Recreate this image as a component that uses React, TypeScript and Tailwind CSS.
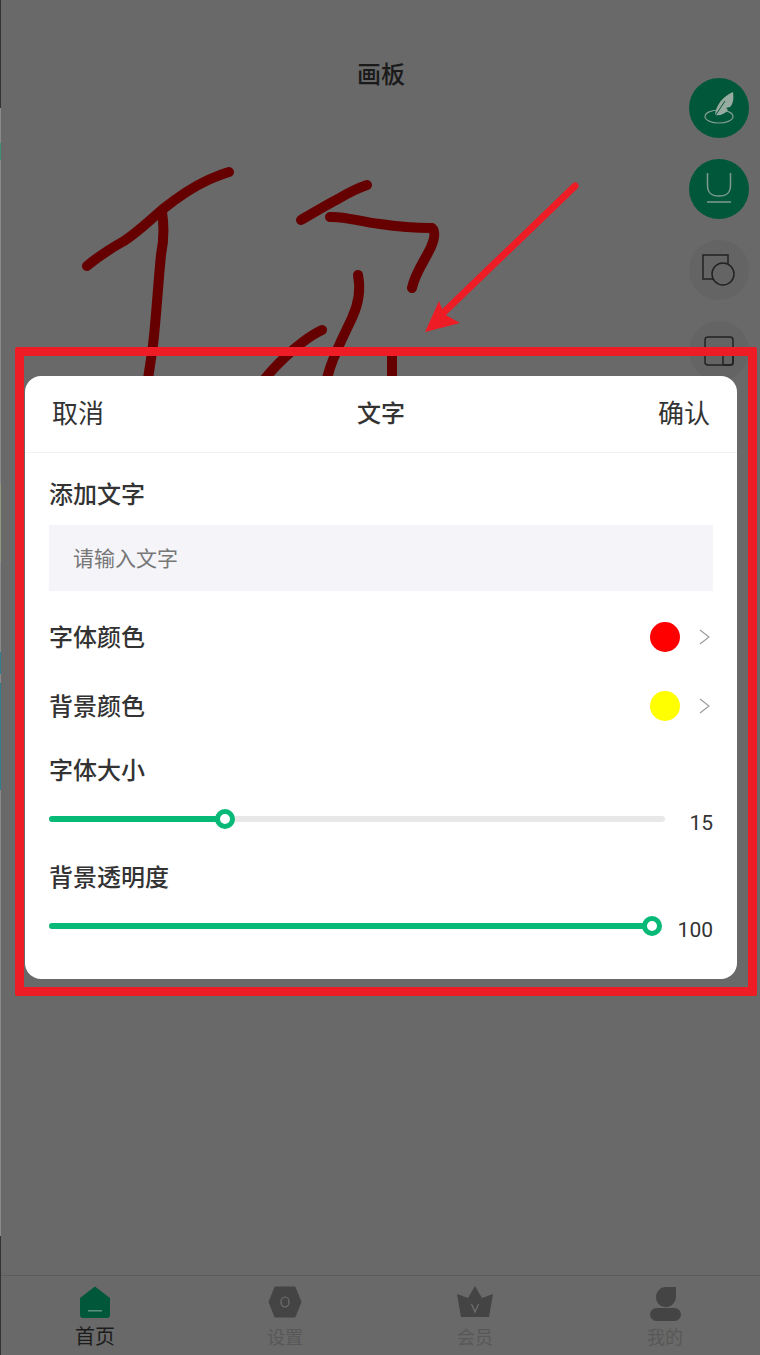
const cjk = "font-['Roboto','Noto_Sans_CJK_SC',sans-serif]";

function Slider({ pct, value, top }: { pct: number; value: number; top: string }) {
  return (
    <div className={`flex items-center ${top}`}>
      <div className="relative h-[6px] flex-1 rounded-full bg-[#e8e8e8]">
        <div className="h-full rounded-full bg-[#07b976]" style={{ width: `${pct}%` }} />
        <div
          className="absolute top-1/2 h-[20px] w-[20px] -translate-x-1/2 -translate-y-1/2 rounded-full border-[5px] border-[#07b976] bg-white"
          style={{ left: `${pct}%` }}
        />
      </div>
      <span className="ml-[24px] pt-[9px] text-right text-[21px] leading-[24px] text-[#333]">{value}</span>
    </div>
  );
}

function ColorRow({ label, color, top }: { label: string; color: string; top: string }) {
  return (
    <div className={`flex h-[36px] items-center ${top}`}>
      <span className="flex-1 pt-[2px] text-[24px] font-medium leading-[36px] text-[#333]">{label}</span>
      <span className={`h-[30px] w-[30px] rounded-full ${color}`} />
      <svg className="ml-[18px] mr-[3px]" width="12" height="18" viewBox="0 0 12 18" fill="none">
        <path d="M2 2 L11 9 L2 16" stroke="#999" strokeWidth="1.1" />
      </svg>
    </div>
  );
}

function SideButton({ active, children }: { active?: boolean; children: React.ReactNode }) {
  return (
    <div
      className={`flex h-[60px] w-[60px] items-center justify-center rounded-full ${active ? "bg-[#01573a]" : "bg-[#646464]"}`}
    >
      {children}
    </div>
  );
}

function Tab({ label, active, children }: { label: string; active?: boolean; children: React.ReactNode }) {
  return (
    <div className="flex flex-1 flex-col items-center">
      <div className="flex h-[38px] items-center justify-center">{children}</div>
      {active ? (
        <span className="mt-[3px] text-[20px] leading-[26px] text-[#1c1c1c]">{label}</span>
      ) : (
        <span className="mt-[4px] text-[18px] leading-[26px] text-[#585858]">{label}</span>
      )}
    </div>
  );
}

export default function App() {
  return (
    <div className={`relative flex h-[1355px] w-[760px] flex-col overflow-hidden bg-[#696969] ${cjk}`}>
      {/* page behind the dimmed layer */}
      <div className="relative flex-1">
        <div className="pl-[2px] pt-[59px] text-center text-[24px] font-medium leading-[32px] text-[#1a1a1a]">画板</div>

        <svg className="absolute left-0 top-0" width="760" height="400" fill="none" stroke="#660000" strokeWidth="10" strokeLinecap="round" strokeLinejoin="round">
          <path d="M87 266 C100 255 115 246 124 241 C138 232 150 220 163 209 C178 197 195 186 208 180 C215 177 222 174 229 172" />
          <path d="M162 212 C164 225 164 240 161 255 C158 285 156 320 153 345 C151 360 148 378 146 392" />
          <path d="M301 220 C315 212 328 204 338 199 C348 193 358 188 367 185" />
          <path d="M330 217 C345 216 360 222 380 224 C400 227 420 228 432 228 C436 232 434 240 431 247 C424 262 415 273 412 288" />
          <path d="M358 275 C361 290 358 305 352 318 C345 333 336 350 330 368 C327 378 325 386 324 392" />
          <path d="M322 330 C305 338 290 352 278 364 C270 372 262 382 254 392" />
          <path d="M392 352 L392 392" />
        </svg>

        <div className="absolute left-[689px] top-[78px] flex flex-col gap-[21px]">
          <SideButton active>
            <svg width="42" height="42" viewBox="0 0 42 42" fill="none">
              <ellipse cx="21" cy="29.5" rx="14" ry="6.5" stroke="#7f9c8e" strokeWidth="1.2" />
              <path d="M17 28 C18 18 25 9 35 5 C36 12 35 17 32 20 L28 21 L30 23 C27 27 22 29 17 28 Z" fill="#98aba1" />
              <path d="M17 29 L27 14" stroke="#01573a" strokeWidth="1" />
            </svg>
          </SideButton>
          <SideButton active>
            <svg width="40" height="42" viewBox="0 0 40 42" fill="none" stroke="#7d9c8f" strokeWidth="1.5">
              <path d="M8.5 5 V17 C8.5 25 12 28 20 28 C28 28 31.5 25 31.5 17 V5" />
              <path d="M8 34 H32" />
            </svg>
          </SideButton>
          <SideButton>
            <svg width="36" height="36" viewBox="0 0 36 36" fill="none" stroke="#222" strokeWidth="1.5">
              <path d="M13 27 H2 V3 H27 V11.5" />
              <circle cx="22" cy="22" r="11" />
            </svg>
          </SideButton>
          <SideButton>
            <svg width="32" height="32" viewBox="0 0 32 32" fill="none" stroke="#222" strokeWidth="1.5">
              <rect x="2" y="2" width="28" height="28" rx="3" />
              <rect x="20" y="20" width="10" height="10" rx="2" />
            </svg>
          </SideButton>
        </div>
      </div>

      <div className="flex h-[80px] border-t border-[#5c5c5c] pt-[7px]">
        <Tab label="首页" active>
          <svg width="32" height="32" viewBox="0 0 32 32">
            <path d="M16 0.5 L31 12 V29 Q31 32 28 32 H4 Q1 32 1 29 V12 Z" fill="#01573a" />
            <rect x="9" y="24" width="14" height="1.5" fill="#5f8f7a" />
          </svg>
        </Tab>
        <Tab label="设置">
          <svg width="34" height="32" viewBox="0 0 34 32">
            <path d="M7 1 H27 L33 16 L27 31 H7 L1 16 Z" fill="#444" stroke="#444" strokeWidth="1" strokeLinejoin="round" />
            <ellipse cx="17" cy="16" rx="4" ry="5" fill="none" stroke="#6f6f6f" strokeWidth="1.2" />
          </svg>
        </Tab>
        <Tab label="会员">
          <svg width="36" height="32" viewBox="0 0 36 32">
            <path d="M18 0 L25 12 L36 8 L32 31 H4 L0 8 L11 12 Z" fill="#444" />
            <path d="M14.5 18 L18 26 L21.5 18" fill="none" stroke="#6f6f6f" strokeWidth="1.2" />
          </svg>
        </Tab>
        <Tab label="我的">
          <svg className="mt-[3px]" width="32" height="34" viewBox="0 0 32 34">
            <path d="M27 0 H17 C11 0 7 5 7 10 C7 16 11 20 17 20 C23 20 27 15 27 9 Z" fill="#444" />
            <rect x="1" y="21" width="31" height="13" rx="6.5" fill="#444" />
          </svg>
        </Tab>
      </div>

      {/* sliver of the previous screen along the left edge */}
      <div className="absolute left-0 top-0 flex h-full w-px flex-col bg-[#8a8a8a]">
        <div className="h-[108px] bg-[#333]" />
        <div className="mt-[35px] h-[17px] bg-[#3f8f78]" />
        <div className="mt-[324px] h-[78px] bg-[#8f9a80]" />
        <div className="mt-[90px] h-[22px] bg-[#2f7f90]" />
        <div className="mt-[9px] h-[107px] bg-[#2f7f90]" />
        <div className="mt-[446px] h-[119px] bg-[#333]" />
      </div>

      {/* annotation arrow drawn on top of the screenshot */}
      <svg className="absolute left-0 top-0" width="760" height="340" fill="none">
        <path d="M575 186 L440 316" stroke="#ee1c25" strokeWidth="7" strokeLinecap="round" />
        <path d="M425 332 L439 301 L444 314 L460 323 Z" fill="#ee1c25" />
      </svg>

      <div className="absolute left-[15px] top-[347px] h-[649px] w-[742px] rounded-[2px] border-[9px] border-[#ee1c25]" />

      {/* sheet */}
      <div className="absolute left-[25px] top-[376px] h-[603px] w-[712px] rounded-[16px] bg-white">
        <div className="flex h-[77px] items-center justify-between border-b border-[#f2f2f2] px-[27px] text-[26px] leading-[32px] text-[#333]">
          <span>取消</span>
          <span className="text-[24px] font-medium">文字</span>
          <span>确认</span>
        </div>
        <div className="px-[24px]">
          <div className="mt-[24px] text-[24px] font-medium leading-[36px] text-[#333]">添加文字</div>
          <div className="mt-[12px] flex h-[66px] items-center bg-[#f4f4f9] pl-[24px] pt-[4px] text-[21px] text-[#777]">请输入文字</div>
          <ColorRow label="字体颜色" color="bg-[#ff0000]" top="mt-[28px]" />
          <ColorRow label="背景颜色" color="bg-[#ffff00]" top="mt-[33px]" />
          <div className="mt-[29px] text-[24px] font-medium leading-[36px] text-[#333]">字体大小</div>
          <Slider pct={28.6} value={15} top="mt-[13px]" />
          <div className="mt-[25px] text-[24px] font-medium leading-[36px] text-[#333]">背景透明度</div>
          <Slider pct={99.8} value={100} top="mt-[13px]" />
        </div>
      </div>
    </div>
  );
}
